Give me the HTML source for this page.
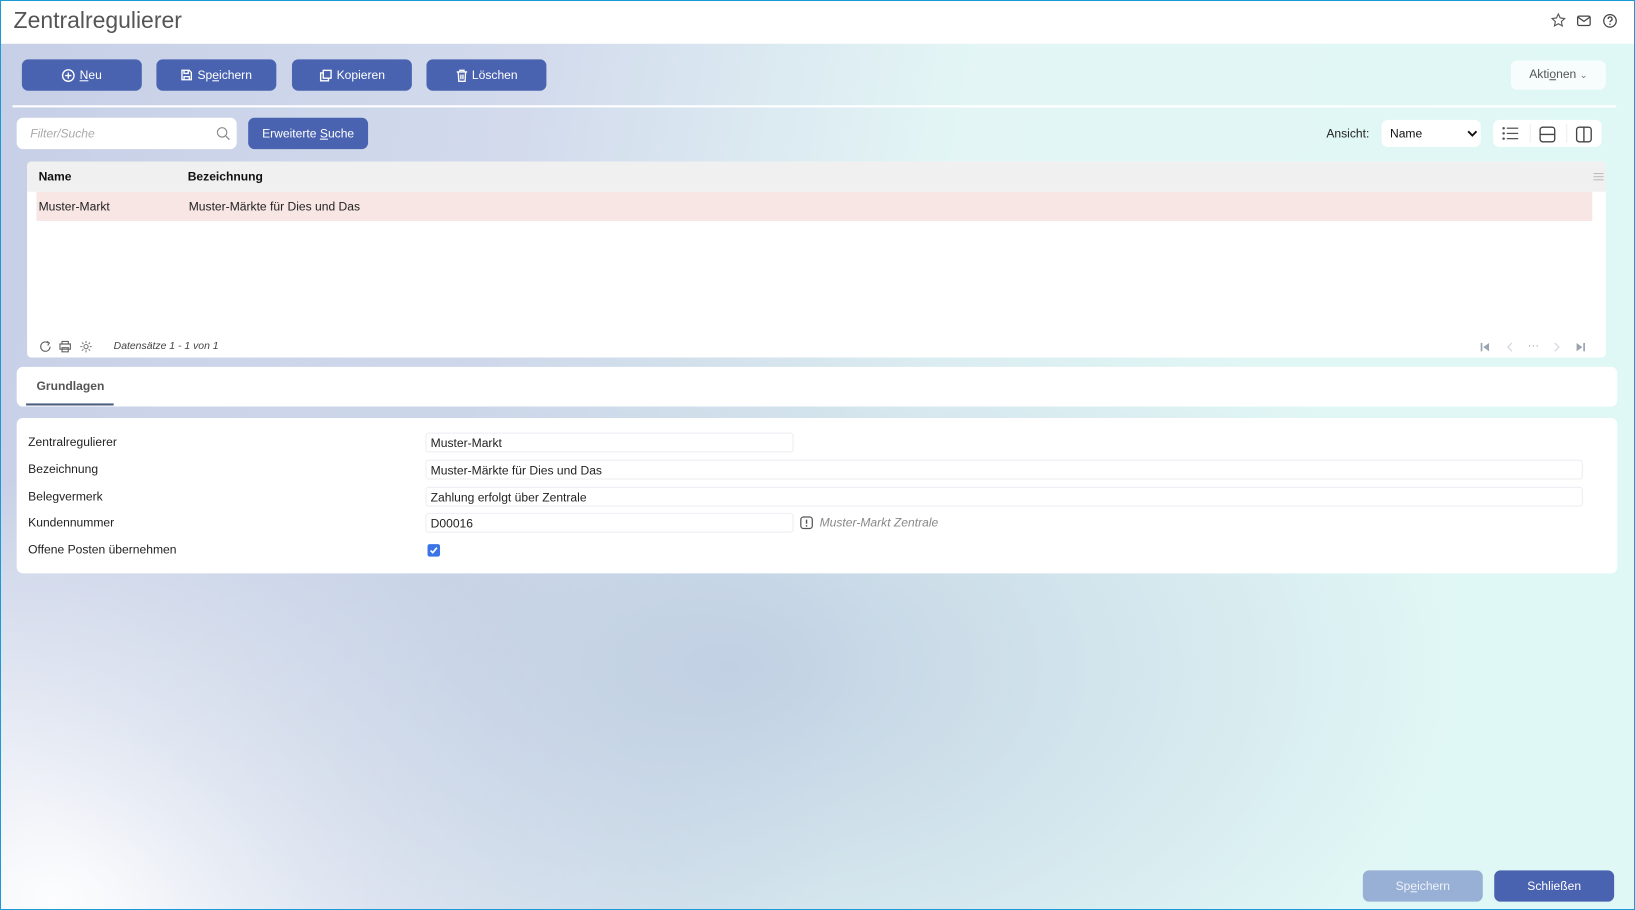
<!DOCTYPE html>
<html><head><meta charset="utf-8">
<style>
html,body{margin:0;padding:0;width:1635px;height:910px;overflow:hidden;background:#fff}
#s{position:absolute;left:0;top:0;width:1568px;height:873px;transform:scale(1.04273,1.0424);transform-origin:0 0;font-family:"Liberation Sans",Arial,sans-serif;font-size:11.6px;color:#222;overflow:hidden;
background:
radial-gradient(ellipse 700px 420px at 700px 640px, rgba(190,205,225,0.9), rgba(190,205,225,0) 100%),
radial-gradient(ellipse 600px 400px at 50px 860px, rgba(255,255,255,0.95), rgba(255,255,255,0) 100%),
linear-gradient(100deg,#c6cfe6 0%,#d2daec 30%,#e3f6f5 55%,#dff8f5 100%);}
.a{position:absolute}
.bd{position:absolute;left:0;top:0;right:0;bottom:0;border:1px solid #1b9ad8;pointer-events:none}
.hdr{left:0;top:0;width:1568px;height:42px;background:#fff}
.btn{position:absolute;height:30px;border-radius:6px;background:#4a63b0;color:#fff;font-size:11.6px;display:flex;align-items:center;justify-content:center;gap:4px}
.btn svg{stroke:#fff;fill:none;stroke-width:1.3}
.panel{position:absolute;background:#fff;border-radius:6px}
.lbl{position:absolute;left:27px;color:#222}
.inp{position:absolute;height:19px;border:1px solid #eceef2;border-radius:3px;background:#fff;line-height:19px;padding-left:4px;box-sizing:border-box}
</style></head><body><div id="s">
<div class="a hdr"></div>
<div class="a" style="left:13px;top:7px;font-size:22px;color:#555">Zentralregulierer</div>
<svg class="a" style="left:1487px;top:12px" width="15" height="15" viewBox="0 0 14 14"><path d="M7 1.3l1.7 3.6 3.9.5-2.9 2.7.8 3.9L7 10.1 3.5 12l.8-3.9L1.4 5.4l3.9-.5z" fill="none" stroke="#555" stroke-width="1"/></svg>
<svg class="a" style="left:1512px;top:14px" width="14" height="12" viewBox="0 0 14 12"><rect x="1" y="1.5" width="12" height="9" rx="1.5" fill="none" stroke="#444" stroke-width="1.2"/><path d="M1.5 2.5L7 6.5l5.5-4" fill="none" stroke="#444" stroke-width="1.2"/></svg>
<svg class="a" style="left:1537px;top:13px" width="14" height="14" viewBox="0 0 14 14"><circle cx="7" cy="7" r="6" fill="none" stroke="#444" stroke-width="1.2"/><path d="M5.2 5.3a1.9 1.9 0 1 1 2.6 1.7c-.6.3-.8.6-.8 1.3" fill="none" stroke="#444" stroke-width="1.2"/><circle cx="7" cy="10.3" r=".7" fill="#444"/></svg>

<div class="btn" style="left:21px;top:57px;width:115px"><svg width="13" height="13" viewBox="0 0 13 13"><circle cx="6.5" cy="6.5" r="5.5"/><path d="M6.5 3.5v6M3.5 6.5h6"/></svg><span><u>N</u>eu</span></div>
<div class="btn" style="left:150px;top:57px;width:115px"><svg width="12" height="12" viewBox="0 0 12 12"><path d="M1.5 1.5h7l2 2v7h-9z"/><path d="M3.5 1.5v3h4v-3M3.5 10.5v-3h5v3"/></svg><span>Sp<u>e</u>ichern</span></div>
<div class="btn" style="left:280px;top:57px;width:115px"><svg width="13" height="13" viewBox="0 0 13 13"><rect x="4" y="1.5" width="7.5" height="7.5"/><path d="M4 4H1.5v7.5H9V9"/></svg><span>Kopieren</span></div>
<div class="btn" style="left:409px;top:57px;width:115px"><svg width="12" height="13" viewBox="0 0 12 13"><path d="M1 3h10M4 3V1.5h4V3M2.5 3l.5 9h6l.5-9M5 5.5v4.5M7 5.5v4.5"/></svg><span>Löschen</span></div>

<div class="a" style="left:1449px;top:58px;width:91px;height:28px;background:rgba(255,255,255,0.75);border-radius:6px;color:#555;line-height:28px;text-align:center">Akti<u>o</u>nen <span style="font-size:9px;color:#777">&#x2304;</span></div>

<div class="a" style="left:12px;top:101px;width:1538px;height:2px;background:#fff"></div>

<div class="a" style="left:16px;top:113px;width:211px;height:30px;background:#fff;border-radius:6px"></div>
<div class="a" style="left:29px;top:122px;font-style:italic;color:#aaa">Filter/Suche</div>
<svg class="a" style="left:207px;top:121px" width="14" height="14" viewBox="0 0 14 14"><circle cx="6" cy="6" r="4.5" fill="none" stroke="#888" stroke-width="1.1"/><path d="M9.3 9.3L13 13" stroke="#888" stroke-width="1.2"/></svg>
<div class="btn" style="left:238px;top:113px;width:115px"><span>Erweiterte <u>S</u>uche</span></div>

<div class="a" style="left:1272px;top:122px;color:#222">Ansicht:</div>
<div class="a" style="left:1325px;top:115px;width:95px;height:26px;background:#fff;border-radius:6px"></div>
<div class="a" style="left:1333px;top:122px;color:#111">Name</div>
<svg class="a" style="left:1407px;top:125px" width="10" height="7" viewBox="0 0 10 7"><path d="M1 1l4 4 4-4" fill="none" stroke="#111" stroke-width="1.8"/></svg>
<div class="a" style="left:1432px;top:115px;width:104px;height:26px;background:#fff;border-radius:6px"></div>
<div class="a" style="left:1467px;top:119px;width:1px;height:18px;background:#eee"></div>
<div class="a" style="left:1502px;top:119px;width:1px;height:18px;background:#eee"></div>
<svg class="a" style="left:1440px;top:121px" width="17" height="14" viewBox="0 0 17 14" fill="#555"><circle cx="2" cy="2" r="1.2"/><circle cx="2" cy="7" r="1.2"/><circle cx="2" cy="12" r="1.2"/><rect x="5" y="1.4" width="11" height="1.2"/><rect x="5" y="6.4" width="11" height="1.2"/><rect x="5" y="11.4" width="11" height="1.2"/></svg>
<svg class="a" style="left:1476px;top:121px" width="16" height="16" viewBox="0 0 16 16"><rect x="1" y="1" width="14" height="14" rx="2.5" fill="none" stroke="#444" stroke-width="1.3"/><path d="M1 8h14" stroke="#444" stroke-width="1.3"/></svg>
<svg class="a" style="left:1511px;top:121px" width="16" height="16" viewBox="0 0 16 16"><rect x="1" y="1" width="14" height="14" rx="2.5" fill="none" stroke="#444" stroke-width="1.3"/><path d="M8 1v14" stroke="#444" stroke-width="1.3"/></svg>

<div class="panel" style="left:26px;top:155px;width:1514px;height:188px;border-radius:4px"></div>
<div class="a" style="left:26px;top:155px;width:1514px;height:29px;background:#f0f0f0;border-radius:4px 4px 0 0"></div>
<div class="a" style="left:37px;top:163px;font-weight:bold;color:#111">Name</div>
<div class="a" style="left:180px;top:163px;font-weight:bold;color:#111">Bezeichnung</div>
<svg class="a" style="left:1528px;top:165px" width="10" height="9" viewBox="0 0 10 9" fill="#bbb"><rect y="1" width="10" height="1"/><rect y="4" width="10" height="1"/><rect y="7" width="10" height="1"/></svg>
<div class="a" style="left:35px;top:184px;width:1492px;height:28px;background:#f7e6e4"></div>
<div class="a" style="left:37px;top:192px;color:#222">Muster-Markt</div>
<div class="a" style="left:181px;top:192px;color:#222">Muster-Märkte für Dies und Das</div>
<svg class="a" style="left:37px;top:326px" width="13" height="13" viewBox="0 0 13 13"><path d="M11 6.5A4.5 4.5 0 1 1 9.3 3" fill="none" stroke="#666" stroke-width="1.1"/><path d="M8 1.5l2.3 1.7-1.6 2.2" fill="none" stroke="#666" stroke-width="1.1"/></svg>
<svg class="a" style="left:56px;top:326px" width="13" height="13" viewBox="0 0 13 13" fill="none" stroke="#666" stroke-width="1.1"><path d="M3.5 4V1.5h6V4M1.5 4h10v5h-10zM3.5 7.5h6v4h-6z"/></svg>
<svg class="a" style="left:76px;top:326px" width="13" height="13" viewBox="0 0 13 13" fill="none" stroke="#777" stroke-width="1"><circle cx="6.5" cy="6.5" r="2"/><path d="M6.5 1v2M6.5 10v2M1 6.5h2M10 6.5h2M2.6 2.6l1.4 1.4M9 9l1.4 1.4M2.6 10.4L4 9M9 4l1.4-1.4"/></svg>
<div class="a" style="left:109px;top:327px;font-size:10px;font-style:italic;color:#444">Datensätze 1 - 1 von 1</div>
<svg class="a" style="left:1419px;top:328px" width="10" height="10" viewBox="0 0 10 10" fill="#9aa3b0"><rect x="1" y="1" width="1.6" height="8"/><path d="M9 1v8L3.5 5z"/></svg>
<svg class="a" style="left:1444px;top:328px" width="8" height="10" viewBox="0 0 8 10"><path d="M6 1L2 5l4 4" fill="none" stroke="#d4d8de" stroke-width="1.2"/></svg>
<div class="a" style="left:1465px;top:326px;color:#9aa3b0;font-size:11px">&middot;&middot;&middot;</div>
<svg class="a" style="left:1489px;top:328px" width="8" height="10" viewBox="0 0 8 10"><path d="M2 1l4 4-4 4" fill="none" stroke="#d4d8de" stroke-width="1.2"/></svg>
<svg class="a" style="left:1511px;top:328px" width="10" height="10" viewBox="0 0 10 10" fill="#9aa3b0"><path d="M1 1v8L6.5 5z"/><rect x="7.4" y="1" width="1.6" height="8"/></svg>

<div class="panel" style="left:16px;top:352px;width:1535px;height:38px"></div>
<div class="a" style="left:35px;top:364px;font-weight:bold;color:#555">Grundlagen</div>
<div class="a" style="left:25px;top:387px;width:84px;height:2px;background:#4a5e80"></div>

<div class="panel" style="left:16px;top:401px;width:1535px;height:149px"></div>
<div class="lbl" style="top:418px">Zentralregulierer</div>
<div class="lbl" style="top:444px">Bezeichnung</div>
<div class="lbl" style="top:470px">Belegvermerk</div>
<div class="lbl" style="top:495px">Kundennummer</div>
<div class="lbl" style="top:521px">Offene Posten übernehmen</div>
<div class="inp" style="left:408px;top:415px;width:353px">Muster-Markt</div>
<div class="inp" style="left:408px;top:441px;width:1110px">Muster-Märkte für Dies und Das</div>
<div class="inp" style="left:408px;top:467px;width:1110px">Zahlung erfolgt über Zentrale</div>
<div class="inp" style="left:408px;top:492px;width:353px">D00016</div>
<svg class="a" style="left:767px;top:495px" width="13" height="13" viewBox="0 0 13 13"><rect x="1" y="1" width="11" height="11" rx="2.5" fill="none" stroke="#555" stroke-width="1.2"/><path d="M6.5 3.5v4" stroke="#555" stroke-width="1.4"/><circle cx="6.5" cy="9.5" r=".8" fill="#555"/></svg>
<div class="a" style="left:786px;top:495px;font-style:italic;color:#888">Muster-Markt Zentrale</div>
<div class="a" style="left:410px;top:522px;width:12px;height:12px;background:#3b74e6;border-radius:2px"></div>
<svg class="a" style="left:411px;top:523px" width="10" height="10" viewBox="0 0 10 10"><path d="M2 5.2l2 2 4-4.8" fill="none" stroke="#fff" stroke-width="1.6"/></svg>

<div class="btn" style="left:1307px;top:835px;width:115px;background:#98b0d6;color:#eef2fa"><span>Sp<u>e</u>ichern</span></div>
<div class="btn" style="left:1433px;top:835px;width:115px"><span>Schließen</span></div>
</div>
<div class="bd"></div>
</body></html>
